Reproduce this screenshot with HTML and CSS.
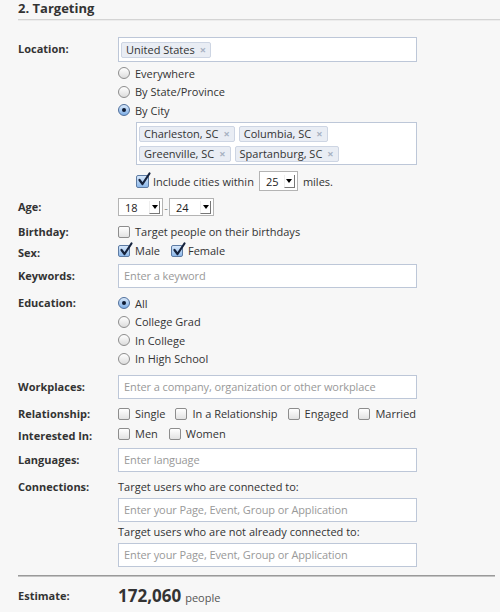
FILE: index.html
```html
<!DOCTYPE html>
<html>
<head>
<meta charset="utf-8">
<title>Targeting</title>
<link rel="stylesheet" href="styles.css">
</head>
<body>
<div class="page">
  <h2 class="section-title">2. Targeting</h2>

  <div class="row row-location">
    <div class="label l-input">Location:</div>
    <div class="field">
      <div class="box tokenbox"><span class="token">United States<span class="x">×</span></span></div>
      <div class="opts loc-opts">
        <div class="opt"><span class="radio"></span>Everywhere</div>
        <div class="opt"><span class="radio"></span>By State/Province</div>
        <div class="opt"><span class="radio on"></span>By City</div>
      </div>
      <div class="box cities">
        <span class="token">Charleston, SC<span class="x">×</span></span>
        <span class="token">Columbia, SC<span class="x">×</span></span>
        <span class="token">Greenville, SC<span class="x">×</span></span>
        <span class="token">Spartanburg, SC<span class="x">×</span></span>
      </div>
      <div class="include">
        <span class="check on"><svg viewBox="0 0 14 14"><path d="M2.5 7 L5.5 11 L12.5 0.5" /></svg></span>
        <span>Include cities within</span>
        <span class="sel sel-miles"><span class="sel-val">25</span><span class="sel-btn"></span></span>
        <span>miles.</span>
      </div>
    </div>
  </div>

  <div class="row row-age">
    <div class="label l-age">Age:</div>
    <div class="field line age-line">
      <span class="sel"><span class="sel-val">18</span><span class="sel-btn"></span></span>
      <span class="dash">-</span>
      <span class="sel"><span class="sel-val">24</span><span class="sel-btn"></span></span>
    </div>
  </div>

  <div class="row row-birthday">
    <div class="label l-line">Birthday:</div>
    <div class="field line">
      <span class="check"></span>Target people on their birthdays
    </div>
  </div>

  <div class="row row-sex">
    <div class="label l-line l-low">Sex:</div>
    <div class="field line">
      <span class="check on"><svg viewBox="0 0 14 14"><path d="M2.5 7 L5.5 11 L12.5 0.5" /></svg></span>Male
      <span class="check on gap-l"><svg viewBox="0 0 14 14"><path d="M2.5 7 L5.5 11 L12.5 0.5" /></svg></span>Female
    </div>
  </div>

  <div class="row row-keywords">
    <div class="label l-input">Keywords:</div>
    <div class="field"><div class="box input">Enter a keyword</div></div>
  </div>

  <div class="row row-education">
    <div class="label l-opt">Education:</div>
    <div class="field opts">
      <div class="opt"><span class="radio on"></span>All</div>
      <div class="opt"><span class="radio"></span>College Grad</div>
      <div class="opt"><span class="radio"></span>In College</div>
      <div class="opt"><span class="radio"></span>In High School</div>
    </div>
  </div>

  <div class="row row-workplaces">
    <div class="label l-input">Workplaces:</div>
    <div class="field"><div class="box input">Enter a company, organization or other workplace</div></div>
  </div>

  <div class="row row-relationship">
    <div class="label l-line">Relationship:</div>
    <div class="field line">
      <span class="check"></span>Single
      <span class="check gap-l2"></span>In a Relationship
      <span class="check gap-l2"></span>Engaged
      <span class="check gap-l2"></span>Married
    </div>
  </div>

  <div class="row row-interested">
    <div class="label l-line l-low">Interested In:</div>
    <div class="field line">
      <span class="check"></span>Men
      <span class="check gap-l"></span>Women
    </div>
  </div>

  <div class="row row-languages">
    <div class="label l-input">Languages:</div>
    <div class="field"><div class="box input">Enter language</div></div>
  </div>

  <div class="row row-connections">
    <div class="label l-text">Connections:</div>
    <div class="field">
      <div class="conn-text">Target users who are connected to:</div>
      <div class="box input conn-input">Enter your Page, Event, Group or Application</div>
      <div class="conn-text conn-text2">Target users who are not already connected to:</div>
      <div class="box input conn-input">Enter your Page, Event, Group or Application</div>
    </div>
  </div>

  <div class="separator"></div>

  <div class="row row-estimate">
    <div class="label l-est">Estimate:</div>
    <div class="field estimate"><span class="num">172,060</span><span class="people">people</span></div>
  </div>
</div>
</body>
</html>
```

FILE: styles.css
```css
html, body {
  margin: 0;
  padding: 0;
  background: #f7f7f7;
}

body {
  font-family: "Open Sans", "DejaVu Sans", sans-serif;
  font-size: 11px;
  color: #333;
}

.page {
  width: 500px;
  height: 612px;
  overflow: hidden;
  padding-left: 18px;
  box-sizing: border-box;
}

.section-title {
  margin: 0;
  height: 19px;
  line-height: 17px;
  font-size: 13px;
  font-weight: bold;
  color: #333;
  border-bottom: 1px solid #d4d4d4;
  box-shadow: 0 1px 0 #ececec;
}

.row {
  display: flex;
  align-items: flex-start;
}

.label {
  width: 100px;
  flex: none;
  font-weight: bold;
  color: #333;
}

.l-input { line-height: 23px; }
.l-age { line-height: 18px; }
.l-line { line-height: 19px; }
.l-low { padding-top: 2px; margin-bottom: -2px; }
.l-opt { line-height: 18.5px; }
.l-text { line-height: 18px; }
.l-est { line-height: 30px; }

.field {
  width: 299px;
  flex: none;
}

.box {
  box-sizing: border-box;
  border: 1px solid #bdc7d8;
  background: #fff;
}

.tokenbox {
  height: 25px;
  display: flex;
  align-items: center;
  padding: 0 2px;
}

.token {
  display: inline-flex;
  align-items: center;
  height: 16px;
  box-sizing: border-box;
  padding: 0 4px 0 4px;
  border: 1px solid #cdd5e3;
  border-radius: 2px;
  background: #e9edf4;
  color: #333;
  line-height: 14px;
}

.x {
  margin-left: 5px;
  color: #a7b1c2;
  font-size: 11px;
  font-weight: bold;
}

.opts .opt,
.loc-opts .opt {
  display: flex;
  align-items: center;
  height: 18.5px;
}

.loc-opts {
  margin-top: 2px;
}

.radio {
  width: 12px;
  height: 12px;
  box-sizing: border-box;
  border: 1px solid #8d8d8d;
  border-radius: 50%;
  background: linear-gradient(#ffffff, #dcdcdc);
  margin-right: 5px;
  display: inline-flex;
  align-items: center;
  justify-content: center;
  flex: none;
}

.radio.on {
  border-color: #4f6f9c;
  background: linear-gradient(#d8e8fa, #7eaee6);
}

.radio.on::after {
  content: "";
  width: 4px;
  height: 4px;
  border-radius: 50%;
  background: #0d1a33;
}

.cities {
  margin: 2.5px 0 0 18px;
  height: 43px;
  padding: 3px 2px 2px;
  display: flex;
  flex-wrap: wrap;
  align-content: flex-start;
  gap: 4px;
}

.include {
  margin: 6px 0 0 18px;
  height: 20px;
  display: flex;
  align-items: center;
}

.include .sel {
  margin: 0 5px 0 5px;
}

.check {
  width: 12px;
  height: 12px;
  box-sizing: border-box;
  border: 1px solid #8d8d8d;
  border-radius: 2px;
  background: linear-gradient(#ffffff, #e2e2e2);
  margin-right: 5px;
  display: inline-block;
  position: relative;
  flex: none;
}

.check.on {
  border-color: #5d7ba3;
  background: linear-gradient(#d6e7fa, #8db8ea);
}

.check svg {
  position: absolute;
  left: 0;
  top: -3px;
  width: 14px;
  height: 14px;
  overflow: visible;
}

.check svg path {
  fill: none;
  stroke: #16233d;
  stroke-width: 2.2;
  stroke-linecap: round;
  stroke-linejoin: round;
}

.include .check {
  width: 13px;
  height: 13px;
  margin-right: 4px;
}

.gap-l { margin-left: 11px; }
.gap-l2 { margin-left: 10px; }

.line {
  display: flex;
  align-items: center;
  height: 19px;
}

.sel {
  display: inline-flex;
  align-items: center;
  box-sizing: border-box;
  width: 45px;
  height: 18px;
  border: 1px solid #b4b4b4;
  background: #fff;
}

.sel-val {
  flex: 1;
  padding-left: 6px;
  color: #222;
}

.sel-btn {
  width: 11px;
  height: 13px;
  box-sizing: border-box;
  margin-right: 2px;
  border-right: 1px solid #777;
  border-bottom: 1px solid #777;
  border-left: 1px solid #eee;
  display: flex;
  align-items: center;
  justify-content: center;
}

.sel-btn::after {
  content: "";
  border-top: 4px solid #000;
  border-left: 3px solid transparent;
  border-right: 3px solid transparent;
}

.sel-miles {
  width: 39px;
  height: 20px;
}

.age-line {
  height: 18px;
}

.dash {
  width: 6px;
  text-align: center;
  color: #888;
}

.input {
  height: 24px;
  line-height: 22px;
  padding-left: 5px;
  color: #999;
  letter-spacing: -0.1px;
}

.conn-text {
  height: 18px;
  line-height: 18px;
}

.conn-input {
  margin-top: 2px;
}

.conn-text2 {
  margin-top: 1px;
}

/* vertical rhythm */
.row-location { margin-top: 17px; }
.row-age { margin-top: 7px; }
.row-birthday { margin-top: 6px; }
.row-sex { margin-top: 0; }
.row-keywords { margin-top: 4px; }
.row-education { margin-top: 6px; }
.row-workplaces { margin-top: 7px; }
.row-relationship { margin-top: 5px; }
.row-interested { margin-top: 1px; }
.row-languages { margin-top: 5px; }
.row-connections { margin-top: 6px; }

.separator {
  margin-top: 8px;
  margin-right: 5px;
  height: 0;
  border-top: 1px solid #9a9a9a;
  border-bottom: 1px solid #c4c4c4;
}

.row-estimate {
  margin-top: 4px;
}

.estimate {
  display: flex;
  align-items: baseline;
  height: 30px;
  line-height: 30px;
}

.num {
  font-size: 17px;
  font-weight: bold;
  color: #333;
}

.people {
  margin-left: 4px;
  font-size: 11px;
  color: #555;
}
```
